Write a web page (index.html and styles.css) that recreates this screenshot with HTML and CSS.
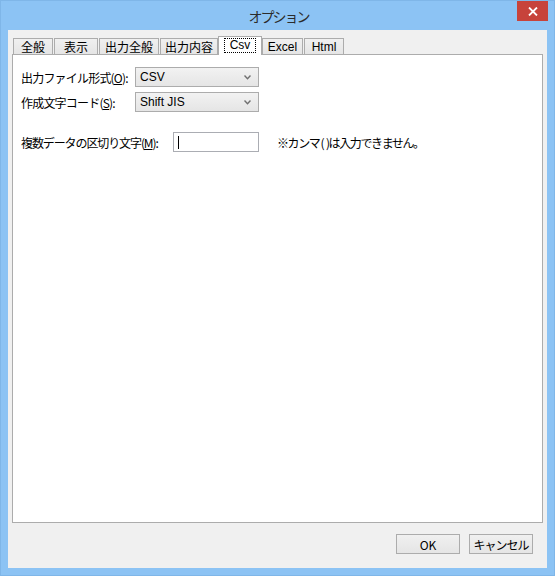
FILE: index.html
```html
<!DOCTYPE html>
<html lang="ja">
<head>
<meta charset="utf-8">
<link rel="stylesheet" href="styles.css">
</head>
<body>
<div class="window">
  <div class="titlebar">
    <div class="title">オプション</div>
    <div class="close"><svg width="10" height="9" viewBox="0 0 10 9"><path d="M1 0.5 L9 8.5 M9 0.5 L1 8.5" stroke="#fff" stroke-width="1.8"/></svg></div>
  </div>
  <div class="client">
    <div class="tabs">
      <div class="tab w1">全般</div>
      <div class="tab w2">表示</div>
      <div class="tab w3">出力全般</div>
      <div class="tab w4">出力内容</div>
      <div class="tab sel w5"><span class="focus">Csv</span></div>
      <div class="tab w6">Excel</div>
      <div class="tab w7">Html</div>
    </div>
    <div class="panel">
      <div class="row">
        <div class="label">出力ファイル形式(<u>O</u>):</div>
        <div class="select"><span>CSV</span><svg class="chev" width="7" height="5" viewBox="0 0 7 5"><path d="M0.5 0.5 L3.5 3.8 L6.5 0.5" fill="none" stroke="#707070" stroke-width="1.4"/></svg></div>
      </div>
      <div class="row">
        <div class="label">作成文字コード(<u>S</u>):</div>
        <div class="select"><span>Shift JIS</span><svg class="chev" width="7" height="5" viewBox="0 0 7 5"><path d="M0.5 0.5 L3.5 3.8 L6.5 0.5" fill="none" stroke="#707070" stroke-width="1.4"/></svg></div>
      </div>
      <div class="row row3">
        <div class="label wide">複数データの区切り文字(<u>M</u>):</div>
        <div class="input"><span class="caret"></span></div>
        <div class="note">※カンマ<span class="paren">(</span>)は入力できません。</div>
      </div>
    </div>
    <div class="buttons">
      <div class="btn">OK</div>
      <div class="btn cancel">キャンセル</div>
    </div>
  </div>
</div>
</body>
</html>
```
FILE: styles.css
```css
* { box-sizing: border-box; }
html, body { margin: 0; padding: 0; }
body {
  width: 555px; height: 576px; overflow: hidden;
  font-family: "Liberation Sans", "Noto Sans CJK JP", sans-serif;
  font-size: 12px; color: #000;
}
.window {
  width: 555px; height: 576px;
  background: #8cc3f4;
  border: 1px solid #7fb6e8;
  display: flex; flex-direction: column;
}
.titlebar {
  height: 29px; position: relative;
  display: flex; align-items: center; justify-content: center;
}
.title {
  font-family: "Noto Sans CJK JP", sans-serif;
  font-size: 14px; color: #2b2b2b; margin-top: 1px; margin-left: 2px;
  letter-spacing: -2px; white-space: nowrap;
}
.close {
  position: absolute; right: 6px; top: 0;
  width: 31px; height: 20px; background: #c7433b;
  display: flex; align-items: center; justify-content: center;
}
.client {
  margin: 0 7px 7px 7px; flex: 1;
  background: #f0f0f0;
  padding: 6px 0 0 4px;
  display: flex; flex-direction: column;
}
.tabs {
  display: flex; align-items: flex-end; height: 18px; position: relative; z-index: 1; padding-left: 1px;
}
.tab {
  height: 16px; border: 1px solid #acacac; border-bottom: none;
  background: linear-gradient(#f0f0f0, #e5e5e5);
  display: flex; align-items: center; justify-content: center;
  font-family: "Noto Sans CJK JP", sans-serif; font-size: 12px;
  margin-right: 1px; white-space: nowrap;
}
.tab.sel {
  height: 19px; margin-bottom: -1px; background: #fff; margin-left: -1px; margin-right: 0;
  align-items: flex-start; padding-top: 1px;
}
.focus {
  font-family: "Liberation Sans", sans-serif;
  border: 1px dotted #000; padding: 0 5px; line-height: 13px; height: 15px;
}
.w1 { width: 40px; } .w2 { width: 44px; } .w3 { width: 60px; } .w4 { width: 58px; }
.w5 { width: 44px; }
.w6 { width: 41px; font-family: "Liberation Sans", sans-serif; }
.w7 { width: 40px; font-family: "Liberation Sans", sans-serif; }
.panel {
  width: 531px; height: 469px;
  background: #fff; border: 1px solid #acacac;
  padding: 12px 8px;
  display: flex; flex-direction: column; gap: 5px;
}
.row { display: flex; align-items: center; height: 20px; }
.row3 { margin-top: 15px; }
.label {
  width: 114px; font-family: "Noto Sans CJK JP", sans-serif; font-size: 12px;
  white-space: nowrap; letter-spacing: -0.8px;
}
.label.wide { width: 152px; letter-spacing: -1.1px; }
.select {
  width: 124px; height: 20px;
  border: 1px solid #acacac;
  background: linear-gradient(#f2f2f2, #e5e5e5);
  display: flex; align-items: center; justify-content: space-between;
  padding: 0 7px 0 4px;
}
.input {
  width: 86px; height: 20px; border: 1px solid #abadb3; background: #fff;
  display: flex; align-items: center; padding-left: 4px;
}
.caret { width: 1px; height: 13px; background: #000; }
.note {
  margin-left: 18px; font-family: "Noto Sans CJK JP", sans-serif; font-size: 12px;
  white-space: nowrap; letter-spacing: -1.4px;
}
.paren { letter-spacing: 1.5px; margin-left: 1px; }
.buttons {
  display: flex; justify-content: flex-end; gap: 9px;
  margin-top: 11px; padding-right: 14px;
}
.btn {
  width: 64px; height: 20px; border: 1px solid #acacac;
  background: linear-gradient(#f0f0f0, #e5e5e5);
  display: flex; align-items: center; justify-content: center;
  font-family: "Noto Sans CJK JP", sans-serif; font-size: 12px; white-space: nowrap;
}
.cancel { letter-spacing: -1px; }
```
